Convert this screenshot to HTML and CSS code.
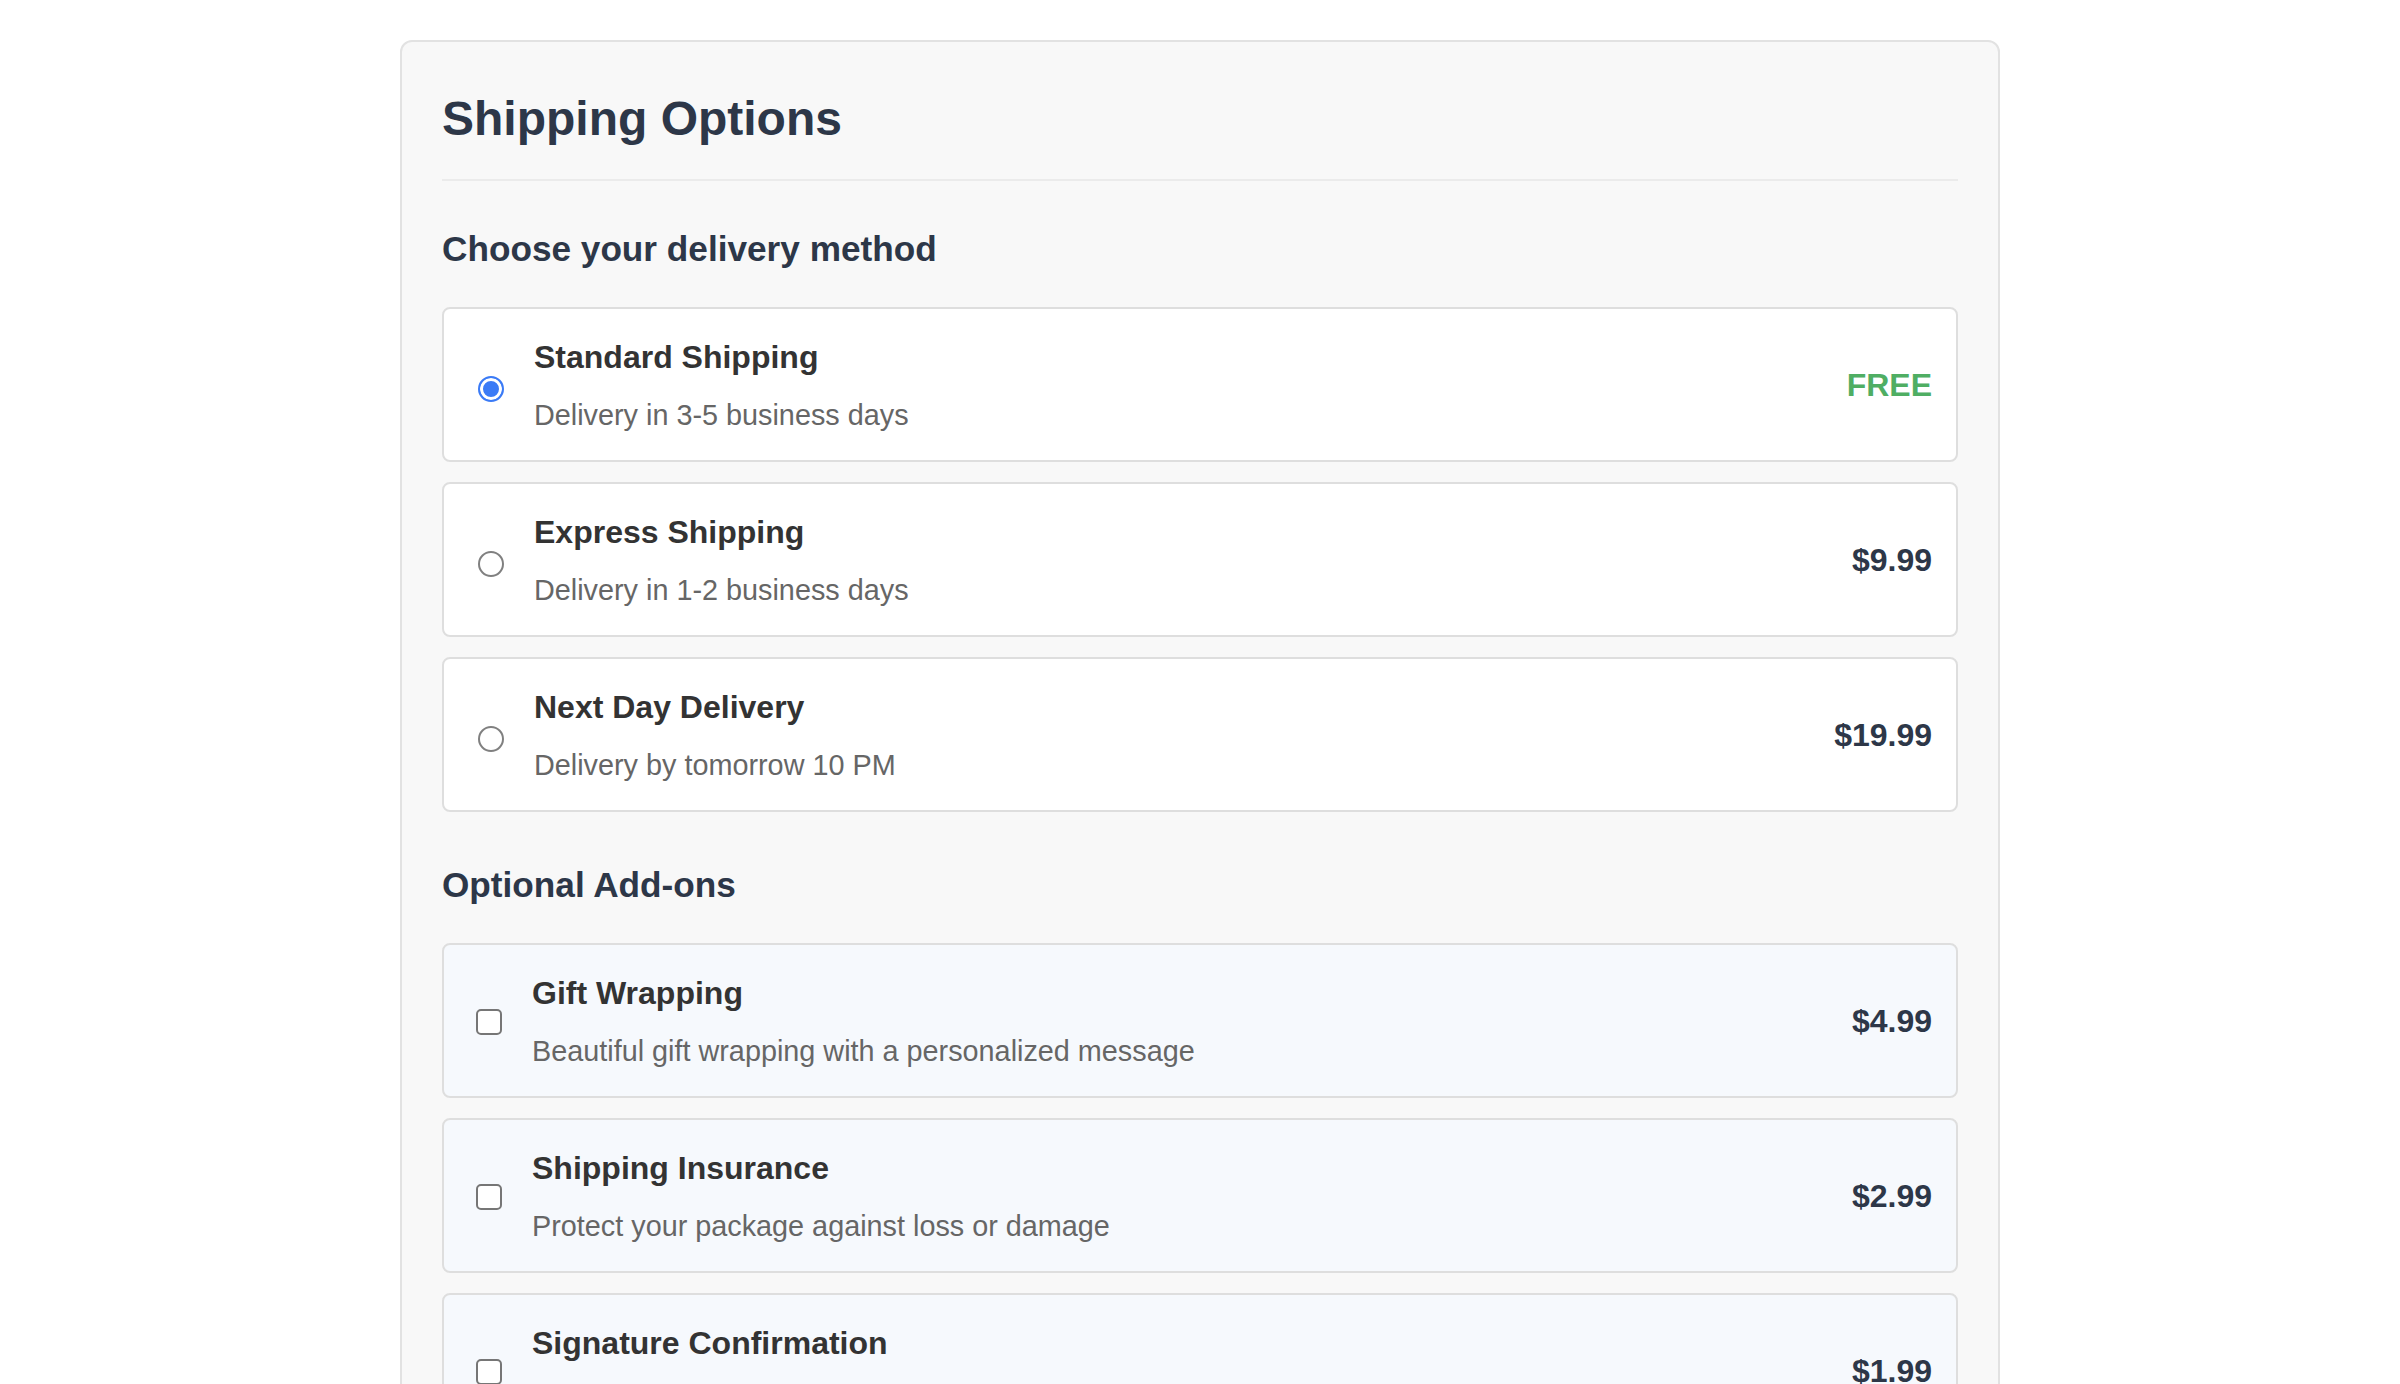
FILE: index.html
```html
<!DOCTYPE html>
<html lang="en">
<head>
<meta charset="utf-8">
<title>Shipping Options</title>
<link rel="stylesheet" href="styles.css">
</head>
<body>
<div class="panel">
  <header class="panel-header">
    <h1 class="panel-title">Shipping Options</h1>
  </header>

  <section class="group">
    <h2 class="group-title">Choose your delivery method</h2>
    <div class="options">
      <label class="option">
        <input type="radio" name="shipping" class="radio" checked>
        <span class="info">
          <span class="name">Standard Shipping</span>
          <span class="desc">Delivery in 3-5 business days</span>
        </span>
        <span class="price free">FREE</span>
      </label>
      <label class="option">
        <input type="radio" name="shipping" class="radio">
        <span class="info">
          <span class="name">Express Shipping</span>
          <span class="desc">Delivery in 1-2 business days</span>
        </span>
        <span class="price">$9.99</span>
      </label>
      <label class="option">
        <input type="radio" name="shipping" class="radio">
        <span class="info">
          <span class="name">Next Day Delivery</span>
          <span class="desc">Delivery by tomorrow 10 PM</span>
        </span>
        <span class="price">$19.99</span>
      </label>
    </div>
  </section>

  <section class="group group-addons">
    <h2 class="group-title">Optional Add-ons</h2>
    <div class="options">
      <label class="option addon">
        <input type="checkbox" class="check">
        <span class="info">
          <span class="name">Gift Wrapping</span>
          <span class="desc">Beautiful gift wrapping with a personalized message</span>
        </span>
        <span class="price">$4.99</span>
      </label>
      <label class="option addon">
        <input type="checkbox" class="check">
        <span class="info">
          <span class="name">Shipping Insurance</span>
          <span class="desc">Protect your package against loss or damage</span>
        </span>
        <span class="price">$2.99</span>
      </label>
      <label class="option addon">
        <input type="checkbox" class="check">
        <span class="info">
          <span class="name">Signature Confirmation</span>
          <span class="desc">Require a signature upon delivery</span>
        </span>
        <span class="price">$1.99</span>
      </label>
    </div>
  </section>
</div>
</body>
</html>
```

FILE: styles.css
```css
body {
  margin: 0;
  background: #ffffff;
  font-family: "Liberation Sans", Arial, Helvetica, sans-serif;
}

.panel {
  width: 1600px;
  box-sizing: border-box;
  margin: 40px auto;
  padding: 41px 40px 40px;
  border: 2px solid #e2e2e2;
  border-radius: 12px;
  background: #f8f8f8;
}

.panel-header {
  padding-bottom: 24px;
  border-bottom: 2px solid #ebebeb;
}

.panel-title {
  margin: 0;
  font-size: 48px;
  line-height: 72px;
  font-weight: 700;
  color: #2d3748;
}

.group-title {
  margin: 46px 0 36px;
  font-size: 35.2px;
  line-height: 44px;
  font-weight: 700;
  color: #2d3748;
}

.group-addons .group-title {
  margin-top: 51px;
}

.options {
  display: flex;
  flex-direction: column;
  gap: 20px;
}

.option {
  display: flex;
  align-items: center;
  padding: 30px 24px 28px;
  border: 2px solid #dedede;
  border-radius: 8px;
  background: #ffffff;
  cursor: pointer;
}

.option.addon {
  background: #f6f9fd;
}

.radio {
  appearance: none;
  -webkit-appearance: none;
  flex: none;
  box-sizing: border-box;
  width: 26px;
  height: 26px;
  margin: 6px 6px 0 10px;
  border: 2px solid #808080;
  border-radius: 50%;
  background: #ffffff;
}

.radio:checked {
  border-color: #3b7bf6;
  background: #3b7bf6;
  box-shadow: inset 0 0 0 3px #ffffff;
}

.check {
  appearance: none;
  -webkit-appearance: none;
  flex: none;
  box-sizing: border-box;
  width: 26px;
  height: 26px;
  margin: 6px 6px 6px 8px;
  border: 2px solid #767676;
  border-radius: 5px;
  background: #ffffff;
}

.info {
  display: flex;
  flex-direction: column;
  margin-left: 24px;
}

.name {
  font-size: 32px;
  line-height: 37px;
  font-weight: 700;
  color: #333333;
}

.desc {
  margin-top: 23px;
  font-size: 28.8px;
  line-height: 33px;
  color: #666666;
}

.price {
  margin-left: auto;
  font-size: 32px;
  font-weight: 700;
  color: #2d3748;
}

.price.free {
  color: #4fae63;
}
```
